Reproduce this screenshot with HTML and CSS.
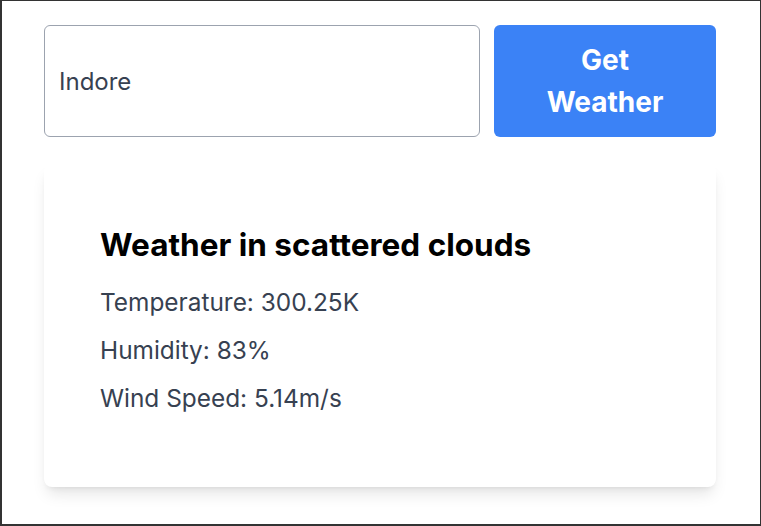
FILE: index.html
```html
<!DOCTYPE html>
<html lang="en">
<head>
<meta charset="utf-8">
<title>Weather</title>
<link rel="stylesheet" href="styles.css">
</head>
<body>
<div class="frame">
  <div class="app">
    <div class="search">
      <input class="city" type="text" value="Indore">
      <button class="get">Get Weather</button>
    </div>
    <div class="card">
      <h2 class="title">Weather in scattered clouds</h2>
      <p class="line">Temperature: 300.25K</p>
      <p class="line">Humidity: 83%</p>
      <p class="line">Wind Speed: 5.14m/s</p>
    </div>
  </div>
</div>
</body>
</html>
```
FILE: styles.css
```css
html, body {
  margin: 0;
  padding: 0;
  background: #fff;
}
body {
  font-family: Inter, "Noto Sans", sans-serif;
}
.frame {
  box-sizing: border-box;
  width: 761px;
  height: 526px;
  border-style: solid;
  border-color: #333;
  border-width: 1px 1px 2px 2px;
  padding: 24px 0 0 42px;
}
.app {
  width: 672px;
}
.search {
  display: flex;
  gap: 14px;
  height: 112px;
}
.city {
  flex: 1;
  min-width: 0;
  box-sizing: border-box;
  height: 112px;
  margin: 0;
  border: 1px solid #9ca3af;
  border-radius: 6px;
  padding: 0 14px;
  font-family: Inter, sans-serif;
  font-size: 24px;
  color: #374151;
  background: #fff;
  outline: none;
}
.get {
  box-sizing: border-box;
  width: 222px;
  height: 112px;
  margin: 0;
  border: none;
  border-radius: 6px;
  background: #3b82f6;
  color: #fff;
  font-family: Inter, sans-serif;
  font-size: 28px;
  font-weight: 700;
  line-height: 42px;
  padding: 14px 40px;
  text-align: center;
}
.card {
  margin-top: 27px;
  box-sizing: border-box;
  height: 323px;
  border-radius: 8px;
  background: #fff;
  box-shadow: 0 10px 15px -3px rgba(0, 0, 0, 0.1), 0 4px 6px -4px rgba(0, 0, 0, 0.1);
  padding: 61px 56px 0 56px;
}
.title {
  margin: 0 0 21px;
  font-size: 31.5px;
  font-weight: 700;
  line-height: 40px;
  color: #000;
}
.line {
  margin: 0 0 16px;
  font-size: 24.4px;
  line-height: 32px;
  color: #374151;
}
```
